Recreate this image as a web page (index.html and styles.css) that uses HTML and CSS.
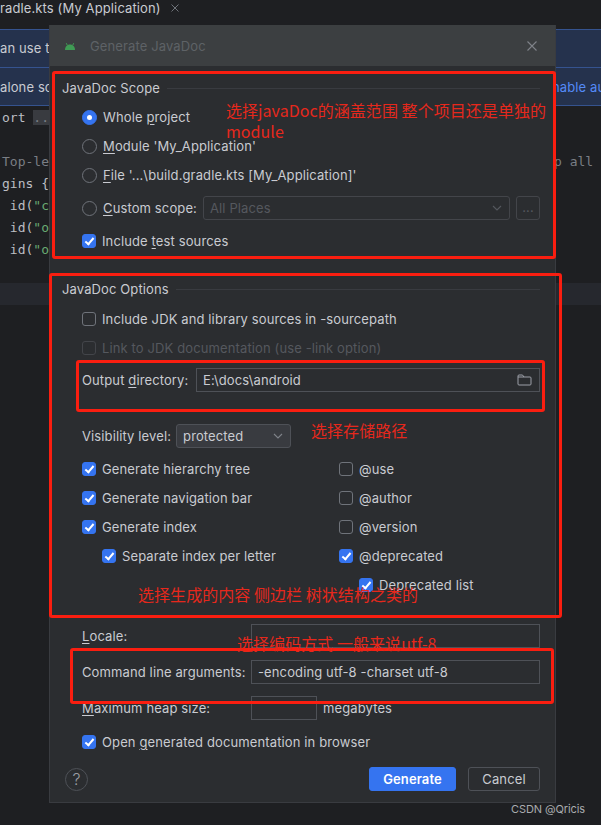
FILE: index.html
```html
<!DOCTYPE html>
<html lang="en">
<head>
    <meta charset="UTF-8">
    <title>Generate JavaDoc</title>
    <link rel="stylesheet" href="styles.css">
</head>
<body>
    <div class="ide">
        <div class="tab-bar">
            <span class="tab-name">radle.kts (My Application)</span>
            <svg class="tab-close" width="10" height="10" viewBox="0 0 10 10"><path d="M1.5 1.5l7 7M8.5 1.5l-7 7"/></svg>
        </div>
        <div class="banner">
            <span class="banner-left">an use t</span>
        </div>
        <div class="banner banner-second">
            <span class="banner-left">alone sc</span>
            <span class="banner-link">nable au</span>
        </div>
        <div class="code">
            <div class="code-line">ort <span class="fold">...</span></div>
            <div class="code-line"></div>
            <div class="code-line comment-row"><span class="comment">Top-le</span><span class="comment comment-end">p all</span></div>
            <div class="code-line">gins {</div>
            <div class="code-line">&nbsp;id(<span class="str">"c</span></div>
            <div class="code-line">&nbsp;id(<span class="str">"o</span></div>
            <div class="code-line">&nbsp;id(<span class="str">"o</span></div>
            <div class="code-line"></div>
            <div class="code-line current"></div>
        </div>
    </div>

    <div class="dialog">
        <div class="title-bar">
            <svg class="android" width="10" height="8" viewBox="0 0 10 8"><path d="M0 8C0 5 2 2.600 5 2.600S10 5 10 8z"/><path class="antenna" d="M2.400 3.500L1.300 1.200M7.600 3.500l1.100-2.300"/></svg>
            <span class="title">Generate JavaDoc</span>
            <svg class="close" width="12" height="12" viewBox="0 0 12 12"><path d="M1.500 1.500l9 9M10.500 1.500l-9 9"/></svg>
        </div>
        <div class="body">
            <div class="group-title scope-title">JavaDoc Scope<i></i></div>
            <div class="row"><span class="radio on"></span><span>Whole <u>p</u>roject</span></div>
            <div class="row"><span class="radio"></span><span><u>M</u>odule 'My_Application'</span></div>
            <div class="row"><span class="radio"></span><span><u>F</u>ile '...\build.gradle.kts [My_Application]'</span></div>
            <div class="row row-scope">
                <span class="radio"></span><span class="scope-label"><u>C</u>ustom scope:</span>
                <div class="field scope-field disabled">All Places
                    <svg class="chev" width="10" height="6" viewBox="0 0 10 6"><path d="M1 1l4 4 4-4"/></svg>
                </div>
                <div class="more">...</div>
            </div>
            <div class="row"><span class="check on"></span><span>Include <u>t</u>est sources</span></div>

            <div class="group-title options-title">JavaDoc Options<i></i></div>
            <div class="row"><span class="check"></span><span>Include JDK and library sources in -sourcepath</span></div>
            <div class="row muted"><span class="check off"></span><span>Link to JDK documentation (use -link option)</span></div>
            <div class="row row-output">
                <span class="output-label">Output <u>d</u>irectory:</span>
                <div class="field output-field">E:\docs\android
                    <svg class="folder" width="15" height="12" viewBox="0 0 15 12"><path d="M1 3V2a1 1 0 0 1 1-1h3.500l1.500 2h6a1 1 0 0 1 1 1v6a1 1 0 0 1-1 1H2a1 1 0 0 1-1-1zh6"/></svg>
                </div>
            </div>
            <div class="row-visibility">
                <span>Visibility level:</span>
                <div class="select">protected
                    <svg class="chev" width="10" height="6" viewBox="0 0 10 6"><path d="M1 1l4 4 4-4"/></svg>
                </div>
            </div>
            <div class="check-grid">
                <div class="row"><span class="check on"></span><span>Generate hierarchy tree</span></div>
                <div class="row"><span class="check"></span><span>@use</span></div>
                <div class="row"><span class="check on"></span><span>Generate navigation bar</span></div>
                <div class="row"><span class="check"></span><span>@author</span></div>
                <div class="row"><span class="check on"></span><span>Generate index</span></div>
                <div class="row"><span class="check"></span><span>@version</span></div>
                <div class="row sub"><span class="check on"></span><span>Separate index per letter</span></div>
                <div class="row"><span class="check on"></span><span>@deprecated</span></div>
                <div class="row"></div>
                <div class="row sub"><span class="check on"></span><span>Deprecated list</span></div>
            </div>
            <div class="form-grid">
                <span><u>L</u>ocale:</span>
                <div class="field"></div>
                <span>Command line arguments:</span>
                <div class="field">-encoding utf-8 -charset utf-8</div>
                <span><u>M</u>aximum heap size:</span>
                <div class="heap"><div class="field heap-field"></div>megabytes</div>
            </div>
            <div class="row open-row"><span class="check on"></span><span>Open <u>g</u>enerated documentation in browser</span></div>
            <div class="footer">
                <div class="help">?</div>
                <div class="btn primary">Generate</div>
                <div class="btn">Cancel</div>
            </div>
        </div>
    </div>

    <div class="mark mark-scope"></div>
    <div class="mark mark-options"></div>
    <div class="mark mark-output"></div>
    <div class="mark mark-args"></div>

    <div class="note note-scope">选择javaDoc的涵盖范围 整个项目还是单独的<br>module</div>
    <div class="note note-path">选择存储路径</div>
    <div class="note note-content">选择生成的内容 侧边栏 树状结构之类的</div>
    <div class="note note-encoding">选择编码方式 一般来说utf-8</div>
    <div class="watermark">CSDN @Qricis</div>
</body>
</html>
```

FILE: styles.css
```css
html, body {
    margin: 0;
    height: 100%;
}
body {
    position: relative;
    width: 601px;
    height: 825px;
    overflow: hidden;
    background: #1e1f22;
    font-family: Inter, "Noto Sans", sans-serif;
    font-size: 13px;
    letter-spacing: .12px;
    color: #c9cbd1;
}
u {
    text-underline-offset: 2px;
}

/* editor behind the dialog */
.tab-bar {
    height: 27px;
    display: flex;
    align-items: center;
    padding-bottom: 11px;
    box-sizing: border-box;
    background: #1e1f22;
}
.tab-name {
    width: 170px;
    white-space: nowrap;
}
.tab-close {
    fill: none;
    stroke: #6f737a;
    stroke-width: 1;
}
.banner {
    height: 38px;
    margin-top: 2px;
    padding-bottom: 1px;
    display: flex;
    align-items: center;
    box-sizing: border-box;
    background: #25324d;
    border-top: 1px solid #35538f;
    white-space: nowrap;
    overflow: hidden;
}
.banner-second {
    margin-top: 0;
    height: 39px;
    padding-bottom: 0;
    border-bottom: 1px solid #35538f;
}
.banner-left {
    width: 552px;
    flex: none;
}
.banner-link {
    color: #548af7;
}
.code {
    padding-top: 1px;
    font-family: "DejaVu Sans Mono", monospace;
    font-size: 13px;
    letter-spacing: 0;
    color: #bcbec4;
}
.code-line {
    height: 22px;
    line-height: 22px;
    padding-left: 2px;
    white-space: nowrap;
}
.comment-row {
    display: flex;
}
.comment {
    width: 552px;
    flex: none;
    color: #7a7e85;
}
.comment-end {
    width: auto;
}
.fold {
    background: #393b40;
    color: #7a7e85;
}
.str {
    color: #6aab73;
}
.current {
    background: #26282e;
}

/* dialog */
.dialog {
    position: absolute;
    left: 49px;
    top: 25px;
    width: 507px;
    height: 778px;
    box-sizing: border-box;
    background: #2b2d30;
    border: 1px solid #393b40;
    border-top: none;
}
.title-bar {
    height: 41px;
    display: flex;
    align-items: center;
    padding-left: 15px;
    padding-right: 17px;
    background: #3c3f41;
}
.android {
    fill: #3f9b54;
    margin-right: 15px;
}
.android .antenna {
    fill: none;
    stroke: #3f9b54;
}
.title {
    flex: 1;
    color: #5e6266;
    font-size: 13px;
}
.close {
    fill: none;
    stroke: #7f8389;
    stroke-width: 1.1;
}
.body {
    padding: 11px 15px 0 12px;
}
.group-title {
    height: 22px;
    line-height: 22px;
    display: flex;
    align-items: center;
    gap: 7px;
}
.group-title i {
    flex: 1;
    height: 1px;
    background: #393b40;
}
.scope-title {
    margin-bottom: 4px;
}
.options-title {
    margin-top: 23px;
    margin-bottom: 5px;
}
.row {
    height: 28px;
    margin-bottom: 1px;
    margin-left: 20px;
    display: flex;
    align-items: center;
    white-space: nowrap;
}
.row-scope {
    height: 36px;
}
.scope-label {
    width: 100px;
    flex: none;
}
.row-output {
    height: 33px;
    margin-bottom: 0;
}
.output-label {
    width: 114px;
    flex: none;
}
.row-visibility {
    height: 24px;
    margin: 28px 0 7px 20px;
    display: flex;
    align-items: center;
    gap: 5px;
}
.muted {
    color: #55585e;
}
.radio, .check {
    flex: none;
    box-sizing: border-box;
    width: 14px;
    height: 14px;
    margin-right: 6px;
    border: 1px solid #6f737a;
    border-radius: 3px;
    position: relative;
}
.radio {
    width: 15px;
    height: 15px;
    margin-right: 6px;
    border-radius: 50%;
}
.radio.on {
    background: #3574f0;
    border-color: #3574f0;
}
.radio.on::after {
    content: "";
    position: absolute;
    left: 4px;
    top: 4px;
    width: 5px;
    height: 5px;
    border-radius: 50%;
    background: #fff;
}
.check.on {
    background: #3574f0;
    border-color: #3574f0;
}
.check.on::after {
    content: "";
    position: absolute;
    left: 4px;
    top: 1px;
    width: 3px;
    height: 7px;
    border: solid #fff;
    border-width: 0 2px 2px 0;
    transform: rotate(40deg);
}
.check.off {
    border-color: #43454a;
}
.field {
    position: relative;
    box-sizing: border-box;
    height: 24px;
    line-height: 22px;
    padding: 0 6px;
    border: 1px solid #4e5157;
    white-space: nowrap;
}
.scope-field {
    flex: 1;
    border-radius: 3px;
}
.disabled {
    border-color: #43454a;
    color: #55585e;
}
.disabled .chev {
    stroke: #55585e;
}
.more {
    width: 24px;
    height: 24px;
    line-height: 20px;
    margin-left: 6px;
    box-sizing: border-box;
    text-align: center;
    color: #55585e;
    border: 1px solid #43454a;
    border-radius: 3px;
}
.chev {
    position: absolute;
    right: 7px;
    top: 8px;
    fill: none;
    stroke: #7f8389;
    stroke-width: 1.100;
}
.output-field {
    flex: 1;
}
.folder {
    position: absolute;
    right: 7px;
    top: 5px;
    fill: none;
    stroke: #9da0a8;
}
.select {
    position: relative;
    box-sizing: border-box;
    width: 115px;
    height: 24px;
    line-height: 22px;
    padding: 0 6px;
    background: #393b40;
    border: 1px solid #4e5157;
    border-radius: 3px;
}
.check-grid {
    display: grid;
    grid-template-columns: 257px 1fr;
}
.sub {
    margin-left: 40px;
}
.form-grid {
    display: grid;
    grid-template-columns: 169px 1fr;
    row-gap: 12px;
    align-items: center;
    margin: 24px 0 0 20px;
}
.heap {
    display: flex;
    align-items: center;
    gap: 6px;
}
.heap-field {
    width: 66px;
}
.open-row {
    margin-top: 8px;
    margin-bottom: 0;
}
.footer {
    margin-top: 11px;
    display: flex;
    align-items: center;
    gap: 12px;
}
.help {
    width: 23px;
    height: 23px;
    margin-left: 3px;
    margin-right: auto;
    box-sizing: border-box;
    line-height: 21px;
    text-align: center;
    font-size: 16px;
    font-weight: 300;
    color: #9a9da3;
    border: 1px solid #4e5157;
    border-radius: 50%;
}
.btn {
    box-sizing: border-box;
    width: 72px;
    height: 24px;
    line-height: 22px;
    text-align: center;
    border: 1px solid #4e5157;
    border-radius: 3px;
}
.btn.primary {
    width: 87px;
    background: #3574f0;
    border-color: #3574f0;
    color: #fff;
    font-weight: 600;
}

/* red annotations drawn on top of the screenshot */
.mark {
    position: absolute;
    box-sizing: border-box;
    border: 3px solid #fa1e10;
    border-radius: 3px;
}
.mark-scope {
    left: 52px;
    top: 71px;
    width: 504px;
    height: 188px;
}
.mark-options {
    left: 49px;
    top: 273px;
    width: 513px;
    height: 345px;
}
.mark-output {
    left: 76px;
    top: 360px;
    width: 469px;
    height: 52px;
}
.mark-args {
    left: 70px;
    top: 648px;
    width: 484px;
    height: 56px;
}
.note {
    position: absolute;
    font-family: "Noto Sans CJK SC", "Noto Sans", sans-serif;
    font-size: 16px;
    letter-spacing: .05px;
    line-height: 21px;
    color: #e6281c;
    white-space: nowrap;
}
.note-scope {
    left: 226px;
    top: 100px;
}
.note-path {
    left: 311px;
    top: 420px;
}
.note-content {
    left: 138px;
    top: 584px;
}
.note-encoding {
    left: 237px;
    top: 633px;
}
.watermark {
    position: absolute;
    left: 511px;
    top: 802px;
    font-size: 11px;
    letter-spacing: -.1px;
    color: #a9abae;
}
```
